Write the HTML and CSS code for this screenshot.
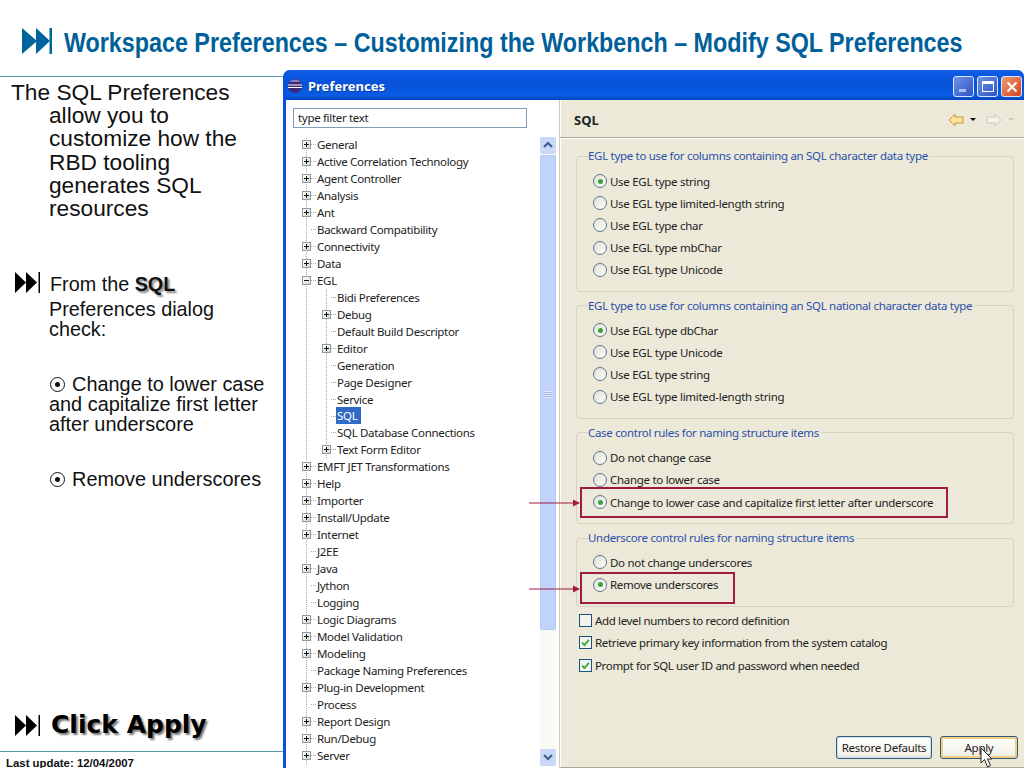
FILE: index.html
```html
<!DOCTYPE html>
<html lang="en">
<head>
<meta charset="utf-8">
<title>Workspace Preferences</title>
<link rel="stylesheet" href="styles.css">
</head>
<body>
<div class="slide">
  <header class="head">
    <svg class="ff ff-title" viewBox="0 0 30 26"><path d="M0 0L15 13L0 26ZM14 0L28 13L14 26Z"/><rect x="27.500" width="2.500" height="26"/></svg>
    <h1>Workspace Preferences – Customizing the Workbench – Modify SQL Preferences</h1>
  </header>
  <div class="main">
    <aside class="notes">
      <div class="notes-body">
        <p class="intro">The SQL Preferences<br><span class="hang">allow you to<br>customize how the<br>RBD tooling<br>generates SQL<br>resources</span></p>
        <div class="step">
          <svg class="ff ff-step" viewBox="0 0 25 21"><path d="M0 0L11 10.500L0 21ZM11 0L22 10.500L11 21Z"/><rect x="23.500" width="1.500" height="21"/></svg>
          <p><span class="lead">From the <b class="shadow">SQL</b></span>Preferences dialog<br>check:</p>
        </div>
        <p class="sub-a"><span class="target"></span> Change to lower case<br>and capitalize first letter<br>after underscore</p>
        <p class="sub-b"><span class="target"></span> Remove underscores</p>
        <div class="click">
          <svg class="ff ff-step" viewBox="0 0 25 21"><path d="M0 0L11 10.500L0 21ZM11 0L22 10.500L11 21Z"/><rect x="23.500" width="1.500" height="21"/></svg>
          <strong>Click Apply</strong>
        </div>
      </div>
      <footer class="foot">Last update: 12/04/2007</footer>
    </aside>
    <section class="win">
      <div class="titlebar">
        <svg class="eclipse" viewBox="0 0 14 14"><circle cx="7" cy="7" r="7" fill="#3a2a78"/><path d="M0 5.500h14v1H0zM0 8h14v1H0z" fill="#fff"/><path d="M1.500 3h11L11 1.500 7 .5 3 1.500z" fill="#8c80c0"/></svg>
        <span class="wintitle">Preferences</span>
        <span class="wbtns">
          <span class="wb"><span class="min"></span></span>
          <span class="wb"><span class="max"></span></span>
          <span class="wb close"><svg viewBox="0 0 12 12"><path d="M1.500 1.500L10.500 10.500M10.500 1.500L1.500 10.500" stroke="#fff" stroke-width="2.200"/></svg></span>
        </span>
      </div>
      <div class="winbody">
        <div class="leftpane">
          <div class="filter">type filter text</div>
          <div class="treewrap">
            <ul class="tree">
              <li class="r"><i class="ex"></i><span>General</span></li>
              <li class="r"><i class="ex"></i><span>Active Correlation Technology</span></li>
              <li class="r"><i class="ex"></i><span>Agent Controller</span></li>
              <li class="r"><i class="ex"></i><span>Analysis</span></li>
              <li class="r"><i class="ex"></i><span>Ant</span></li>
              <li class="r"><i class="lf"></i><span>Backward Compatibility</span></li>
              <li class="r"><i class="ex"></i><span>Connectivity</span></li>
              <li class="r"><i class="ex"></i><span>Data</span></li>
              <li class="r"><i class="ex open"></i><span>EGL</span></li>
              <li>
                <ul class="tree nested">
                  <li class="r"><i class="lf"></i><span>Bidi Preferences</span></li>
                  <li class="r"><i class="ex"></i><span>Debug</span></li>
                  <li class="r"><i class="lf"></i><span>Default Build Descriptor</span></li>
                  <li class="r"><i class="ex"></i><span>Editor</span></li>
                  <li class="r"><i class="lf"></i><span>Generation</span></li>
                  <li class="r"><i class="lf"></i><span>Page Designer</span></li>
                  <li class="r"><i class="lf"></i><span>Service</span></li>
                  <li class="r"><i class="lf"></i><span class="sel">SQL</span></li>
                  <li class="r"><i class="lf"></i><span>SQL Database Connections</span></li>
                  <li class="r"><i class="ex"></i><span>Text Form Editor</span></li>
                </ul>
              </li>
              <li class="r"><i class="ex"></i><span>EMFT JET Transformations</span></li>
              <li class="r"><i class="ex"></i><span>Help</span></li>
              <li class="r"><i class="ex"></i><span>Importer</span></li>
              <li class="r"><i class="ex"></i><span>Install/Update</span></li>
              <li class="r"><i class="ex"></i><span>Internet</span></li>
              <li class="r"><i class="lf"></i><span>J2EE</span></li>
              <li class="r"><i class="ex"></i><span>Java</span></li>
              <li class="r"><i class="lf"></i><span>Jython</span></li>
              <li class="r"><i class="lf"></i><span>Logging</span></li>
              <li class="r"><i class="ex"></i><span>Logic Diagrams</span></li>
              <li class="r"><i class="ex"></i><span>Model Validation</span></li>
              <li class="r"><i class="ex"></i><span>Modeling</span></li>
              <li class="r"><i class="lf"></i><span>Package Naming Preferences</span></li>
              <li class="r"><i class="ex"></i><span>Plug-in Development</span></li>
              <li class="r"><i class="lf"></i><span>Process</span></li>
              <li class="r"><i class="ex"></i><span>Report Design</span></li>
              <li class="r"><i class="ex"></i><span>Run/Debug</span></li>
              <li class="r"><i class="ex"></i><span>Server</span></li>
            </ul>
            <div class="scroll">
              <span class="sbtn"><svg viewBox="0 0 16 16"><path d="M4 10L8 6L12 10" fill="none" stroke="#3a5a90" stroke-width="2"/></svg></span>
              <span class="thumb"><i></i></span>
              <span class="sbtn"><svg viewBox="0 0 16 16"><path d="M4 6L8 10L12 6" fill="none" stroke="#3a5a90" stroke-width="2"/></svg></span>
            </div>
          </div>
        </div>
        <div class="rightpane">
          <div class="pagehead">
            <b>SQL</b>
            <span class="nav">
              <svg class="arr" viewBox="0 0 16 14"><path d="M1 7L7 1V4H15V10H7V13Z" fill="#fbe39a" stroke="#c49a3a"/></svg>
              <i class="dd"></i>
              <svg class="arr" viewBox="0 0 16 14"><path d="M15 7L9 1V4H1V10H9V13Z" fill="#f4f3ea" stroke="#c9c8bd"/></svg>
              <i class="dd off"></i>
            </span>
          </div>
          <div class="form">
            <fieldset>
              <legend>EGL type to use for columns containing an SQL character data type</legend>
              <div class="opt"><i class="radio on"></i>Use EGL type string</div>
              <div class="opt"><i class="radio"></i>Use EGL type limited-length string</div>
              <div class="opt"><i class="radio"></i>Use EGL type char</div>
              <div class="opt"><i class="radio"></i>Use EGL type mbChar</div>
              <div class="opt"><i class="radio"></i>Use EGL type Unicode</div>
            </fieldset>
            <fieldset>
              <legend>EGL type to use for columns containing an SQL national character data type</legend>
              <div class="opt"><i class="radio on"></i>Use EGL type dbChar</div>
              <div class="opt"><i class="radio"></i>Use EGL type Unicode</div>
              <div class="opt"><i class="radio"></i>Use EGL type string</div>
              <div class="opt"><i class="radio"></i>Use EGL type limited-length string</div>
            </fieldset>
            <fieldset>
              <legend>Case control rules for naming structure items</legend>
              <div class="opt"><i class="radio"></i>Do not change case</div>
              <div class="opt"><i class="radio"></i>Change to lower case</div>
              <div class="opt"><i class="radio on"></i>Change to lower case and capitalize first letter after underscore</div>
            </fieldset>
            <fieldset>
              <legend>Underscore control rules for naming structure items</legend>
              <div class="opt"><i class="radio"></i>Do not change underscores</div>
              <div class="opt"><i class="radio on"></i>Remove underscores</div>
            </fieldset>
            <div class="checks">
              <div class="chk"><i class="box"></i>Add level numbers to record definition</div>
              <div class="chk"><i class="box"><svg viewBox="0 0 13 13"><path d="M2.500 6.500L5.200 9.500L10.500 3.500" fill="none" stroke="#3aa53a" stroke-width="2.200"/></svg></i>Retrieve primary key information from the system catalog</div>
              <div class="chk"><i class="box"><svg viewBox="0 0 13 13"><path d="M2.500 6.500L5.200 9.500L10.500 3.500" fill="none" stroke="#3aa53a" stroke-width="2.200"/></svg></i>Prompt for SQL user ID and password when needed</div>
            </div>
          </div>
          <div class="actions">
            <span class="btn restore">Restore Defaults</span>
            <span class="btn apply">Apply</span>
          </div>
        </div>
      </div>
    </section>
  </div>
  <div class="hl hl-a"></div>
  <div class="hl hl-b"></div>
  <svg class="pointer pointer-a" viewBox="0 0 52 10"><path d="M0 5H44" stroke="#a01c3c" stroke-width="1.200"/><path d="M44 1.500L51 5L44 8.500Z" fill="#a01c3c"/></svg>
  <svg class="pointer pointer-b" viewBox="0 0 52 10"><path d="M0 5H44" stroke="#a01c3c" stroke-width="1.200"/><path d="M44 1.500L51 5L44 8.500Z" fill="#a01c3c"/></svg>
  <svg class="cursor" viewBox="0 0 14 21"><path d="M1 1V16L4.500 12.500L7.500 20L10.500 18.500L7.500 12H12Z" fill="#fff" stroke="#222"/></svg>
</div>
</body>
</html>
```
FILE: styles.css
```css
* { box-sizing: border-box; }
html, body { margin: 0; padding: 0; background: #fff; }
.slide { position: relative; width: 1024px; height: 768px; overflow: hidden; font-family: "Liberation Sans", Arial, sans-serif; color: #111; }
ul { list-style: none; margin: 0; padding: 0; }
p { margin: 0; }
.head { height: 70px; display: flex; align-items: flex-start; padding: 28px 0 0 22px; }
.ff { display: block; flex: none; fill: currentColor; }
.ff-title { width: 30px; height: 26px; color: #00649c; }
h1 { margin: 0 0 0 12px; font-size: 28px; line-height: 30px; font-weight: 700; color: #00609a; white-space: nowrap; transform: scaleX(.832); transform-origin: 0 50%; width: 898px; }
.main { display: grid; grid-template-columns: 283px 741px; height: 698px; }
.notes { margin-top: 6px; border-top: 1.500px solid #5a9aaa; display: flex; flex-direction: column; height: 692px; }
.notes-body { flex: 1; display: flex; flex-direction: column; padding-top: 4px; min-height: 0; }
.intro { font-size: 22.700px; line-height: 23.200px; padding-left: 11px; }
.hang { display: block; padding-left: 38px; }
.step { display: flex; margin: 52px 0 0 15px; font-size: 19.800px; }
.step p { margin-left: 9px; margin-top: 2px; line-height: 20px; }
.lead { display: block; padding-left: 1px; margin-bottom: 5px; }
.ff-step { width: 25px; height: 21px; color: #000; }
.sub-a { margin: 35px 0 0 49px; font-size: 19.900px; line-height: 20px; }
.sub-b { margin: 35px 0 0 49px; font-size: 19.900px; line-height: 20px; }
.target { display: inline-block; width: 15px; height: 15px; margin: 0 1.500px 0 1px; border: 1.500px solid #111; border-radius: 50%; position: relative; vertical-align: -1px; }
.target::after { content: ""; position: absolute; left: 3.500px; top: 3.500px; width: 5px; height: 5px; border-radius: 50%; background: #111; }
.shadow { text-shadow: 2px 2px 2px #888; }
.click { margin: auto 0 12px 15px; display: flex; align-items: center; gap: 11px; }
.click strong { font-family: "DejaVu Sans", sans-serif; font-size: 25px; line-height: 28px; font-weight: 700; color: #000; text-shadow: 2px 2px 2px #777; }
.foot { border-top: 1.500px solid #5a9aaa; height: 17px; flex: none; padding: 5px 0 0 6px; font-size: 11.400px; line-height: 13px; font-weight: 700; color: #111; }
.win { height: 698px; display: flex; flex-direction: column; border-radius: 7px 7px 0 0; overflow: hidden; background: #0a50dc; border-left: 3px solid #0a50dc; }
.titlebar { height: 30px; margin-left: -3px; padding: 2px 2px 0 5px; display: flex; align-items: center; background: linear-gradient(#1a5fe8 0, #0a58e4 12%, #0653d8 50%, #0a5ce6 85%, #0442b8 100%); }
.eclipse { width: 14px; height: 14px; flex: none; }
.wintitle { margin-left: 6px; color: #fff; font-family: "Noto Sans", sans-serif; font-size: 13px; font-weight: 700; text-shadow: 1px 1px 0 #0a3aa0; }
.wbtns { margin-left: auto; display: flex; gap: 3px; }
.wb { width: 21px; height: 21px; border: 1px solid #d8e4fa; border-radius: 3px; background: linear-gradient(135deg, #6f90e4, #2c55c8); position: relative; display: block; }
.wb .min { position: absolute; left: 5px; bottom: 4px; width: 7px; height: 3px; background: #a9c0f0; }
.wb .max { position: absolute; left: 4px; top: 4px; width: 12px; height: 11px; border: 1.500px solid #fff; border-top-width: 3px; }
.wb.close { background: linear-gradient(135deg, #ee9a70, #d8431f); }
.wb.close svg { position: absolute; left: 4px; top: 4px; width: 12px; height: 12px; }
.winbody { flex: 1; min-height: 0; display: flex; background: #ece9d8; }
.leftpane { width: 274px; flex: none; background: #fff; padding: 8px 0 0 7px; border-right: 1px solid #cfccbc; box-shadow: 1px 0 0 #fff; font-family: "Noto Sans", sans-serif; font-size: 11.500px; letter-spacing: -.32px; color: #222; }
.filter { width: 234px; height: 20px; border: 1px solid #7f9db9; padding-left: 4px; line-height: 18px; }
.treewrap { display: flex; margin-top: 9px; height: 629px; overflow: hidden; }
.tree { width: 247px; flex: none; margin-top: -1px; background: linear-gradient(#aaa 50%, transparent 50%) 13px 0 / 1px 2px repeat-y; }
.tree.nested { width: auto; margin: 0 0 0 20px; height: 169.700px; }
.r { height: 16.970px; display: flex; align-items: center; white-space: nowrap; position: relative; }
.ex { width: 9px; height: 9px; margin-left: 9px; border: 1px solid #8a9aa8; background: linear-gradient(135deg, #fff, #d8d8cc); position: relative; flex: none; display: block; }
.ex::before { content: ""; position: absolute; left: 1px; top: 3px; width: 5px; height: 1px; background: #111; }
.ex::after { content: ""; position: absolute; left: 3px; top: 1px; width: 1px; height: 5px; background: #111; }
.ex.open::after { display: none; }
.lf { width: 9px; margin-left: 9px; flex: none; display: block; }
.ex + span, .lf + span { margin-left: 5px; padding: 0 1px; }
.r::before { content: ""; position: absolute; left: 18px; top: 8px; width: 5px; height: 1px; background: linear-gradient(90deg, #aaa 50%, transparent 50%) 0 0 / 2px 1px; }
.r .sel { background: #316ac5; color: #fff; padding: 0 4px 0 1px; line-height: 17px; }
.scroll { width: 16px; height: 629px; display: flex; flex-direction: column; gap: 1px; background: #fafaf5; }
.sbtn { height: 17px; flex: none; background: #c9d7f8; border-radius: 2px; display: block; }
.sbtn svg { display: block; width: 16px; height: 16px; }
.thumb { height: 475px; flex: none; background: #c1d3fb; border: 1px solid #b4c8f6; border-radius: 2px; display: flex; align-items: center; justify-content: center; }
.thumb i { display: block; width: 7px; height: 7px; background: repeating-linear-gradient(#e6edfd 0 1px, #9fb6ee 1px 2px); margin-top: 4px; }
.scroll .sbtn:last-child { margin-top: auto; }
.rightpane { flex: 1; min-width: 0; display: flex; flex-direction: column; font-family: "Noto Sans", sans-serif; font-size: 11.500px; letter-spacing: -.29px; color: #222; }
.pagehead { height: 38px; flex: none; display: flex; align-items: center; justify-content: space-between; padding: 0 10px 0 14px; border-bottom: 1px solid #aca899; box-shadow: 0 1px 0 #fff; }
.pagehead b { font-size: 13px; letter-spacing: 0; margin-top: 2px; }
.nav { display: flex; align-items: center; gap: 6px; margin-top: 2px; }
.arr { width: 16px; height: 14px; display: block; }
.dd { width: 0; height: 0; border: 3px solid transparent; border-top: 3px solid #000; border-bottom: 0; margin-right: 4px; display: block; }
.dd.off { border-top-color: #c9c8bd; margin-right: 0; }
.form { padding: 0 10px 0 16px; display: flex; flex-direction: column; }
fieldset { margin: 6px 0 0; padding: 5px 0 10px 10px; border: 1px solid #d6d3c2; border-radius: 4px; min-width: 0; }
fieldset:nth-child(odd) { padding-top: 6px; }
legend { padding: 0 2px 0 0; margin-left: 1px; line-height: 16px; color: #2a50ac; height: 16px; letter-spacing: -.31px; }
fieldset:first-child { margin-top: 10px; }
.opt { height: 22.200px; display: flex; align-items: center; white-space: nowrap; }
.radio { width: 14px; height: 14px; margin: 0 3px 0 6px; border: 1px solid #5c7590; border-radius: 50%; background: linear-gradient(135deg, #e0e0d6, #fff); flex: none; position: relative; display: block; }
.radio.on::after { content: ""; position: absolute; left: 3.500px; top: 3.500px; width: 5px; height: 5px; border-radius: 50%; background: #35a53a; }
.checks { margin-top: 3px; padding-left: 3px; letter-spacing: -.35px; }
.chk { height: 22.200px; display: flex; align-items: center; white-space: nowrap; }
.box { width: 13px; height: 13px; margin-right: 3px; border: 1px solid #1c5180; background: #f4f4ee; flex: none; display: block; }
.box svg { display: block; width: 11px; height: 11px; }
.actions { margin-top: auto; height: 32px; flex: none; display: flex; gap: 8px; justify-content: flex-end; padding-right: 6px; border-bottom: 1px solid #aca899; letter-spacing: -.29px; }
.btn { height: 23px; border: 1px solid #2f5a78; border-radius: 3px; background: linear-gradient(#fff, #f2f1e8 85%, #dcd8c8); display: flex; align-items: center; justify-content: center; box-shadow: inset 0 0 0 1px #cfe0f2; }
.restore { width: 96px; }
.apply { width: 78px; box-shadow: inset 0 0 0 2px #f2cf85; }
.hl { position: absolute; border: 2px solid #a01c3c; }
.hl-a { left: 580px; top: 487px; width: 368px; height: 31px; }
.hl-b { left: 580px; top: 572px; width: 155px; height: 32px; }
.pointer { position: absolute; left: 529px; width: 52px; height: 10px; }
.pointer-a { top: 498px; }
.pointer-b { top: 584px; }
.cursor { position: absolute; left: 980px; top: 747px; width: 14px; height: 21px; }
```
